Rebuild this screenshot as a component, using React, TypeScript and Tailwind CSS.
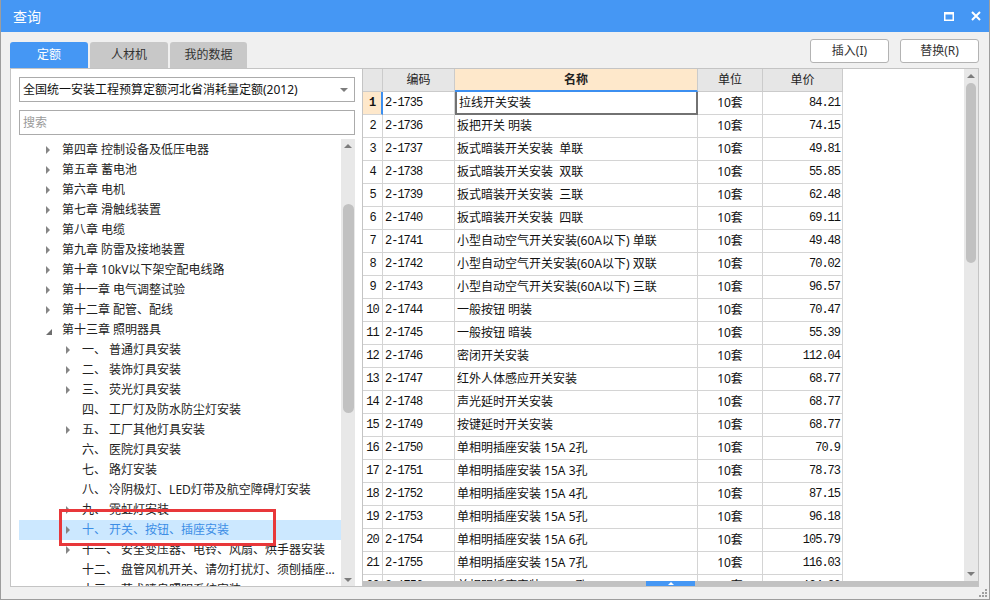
import React from "react";

const sans = "font-['Noto_Sans','Noto_Sans_CJK_SC',sans-serif]";
const mono = "font-['Liberation_Mono','Noto_Sans_CJK_SC',monospace]";

type Node = { lv: number; t: string; a?: "r" | "d"; sel?: boolean };

const tree: Node[] = [
  { lv: 1, t: "第四章 控制设备及低压电器", a: "r" },
  { lv: 1, t: "第五章 蓄电池", a: "r" },
  { lv: 1, t: "第六章 电机", a: "r" },
  { lv: 1, t: "第七章 滑触线装置", a: "r" },
  { lv: 1, t: "第八章 电缆", a: "r" },
  { lv: 1, t: "第九章 防雷及接地装置", a: "r" },
  { lv: 1, t: "第十章 10kV以下架空配电线路", a: "r" },
  { lv: 1, t: "第十一章 电气调整试验", a: "r" },
  { lv: 1, t: "第十二章 配管、配线", a: "r" },
  { lv: 1, t: "第十三章 照明器具", a: "d" },
  { lv: 2, t: "一、 普通灯具安装", a: "r" },
  { lv: 2, t: "二、 装饰灯具安装", a: "r" },
  { lv: 2, t: "三、 荧光灯具安装", a: "r" },
  { lv: 2, t: "四、 工厂灯及防水防尘灯安装" },
  { lv: 2, t: "五、 工厂其他灯具安装", a: "r" },
  { lv: 2, t: "六、 医院灯具安装" },
  { lv: 2, t: "七、 路灯安装" },
  { lv: 2, t: "八、 冷阴极灯、LED灯带及航空障碍灯安装" },
  { lv: 2, t: "九、 霓虹灯安装", a: "r" },
  { lv: 2, t: "十、 开关、按钮、插座安装", a: "r", sel: true },
  { lv: 2, t: "十一、 安全变压器、电铃、风扇、烘手器安装", a: "r" },
  { lv: 2, t: "十二、 盘管风机开关、请勿打扰灯、须刨插座、钥匙取电器安装" },
  { lv: 2, t: "十三、 艺术喷泉照明系统安装", a: "r" },
];

const rows: [string, string, string][] = [
  ["2-1735", "拉线开关安装", "84.21"],
  ["2-1736", "扳把开关 明装", "74.15"],
  ["2-1737", "扳式暗装开关安装  单联", "49.81"],
  ["2-1738", "扳式暗装开关安装  双联", "55.85"],
  ["2-1739", "扳式暗装开关安装  三联", "62.48"],
  ["2-1740", "扳式暗装开关安装  四联", "69.11"],
  ["2-1741", "小型自动空气开关安装(60A以下) 单联", "49.48"],
  ["2-1742", "小型自动空气开关安装(60A以下) 双联", "70.02"],
  ["2-1743", "小型自动空气开关安装(60A以下) 三联", "96.57"],
  ["2-1744", "一般按钮 明装", "70.47"],
  ["2-1745", "一般按钮 暗装", "55.39"],
  ["2-1746", "密闭开关安装", "112.04"],
  ["2-1747", "红外人体感应开关安装", "68.77"],
  ["2-1748", "声光延时开关安装", "68.77"],
  ["2-1749", "按键延时开关安装", "68.77"],
  ["2-1750", "单相明插座安装 15A 2孔", "70.9"],
  ["2-1751", "单相明插座安装 15A 3孔", "78.73"],
  ["2-1752", "单相明插座安装 15A 4孔", "87.15"],
  ["2-1753", "单相明插座安装 15A 5孔", "96.18"],
  ["2-1754", "单相明插座安装 15A 6孔", "105.79"],
  ["2-1755", "单相明插座安装 15A 7孔", "116.03"],
  ["2-1756", "单相明插座安装 15A 8孔", "124.30"],
];

const Up = () => (
  <span className="block w-0 h-0 border-x-[4px] border-x-transparent border-b-[4px] border-b-[#7c7c7c]" />
);
const Down = () => (
  <span className="block w-0 h-0 border-x-[4px] border-x-transparent border-t-[4px] border-t-[#7c7c7c]" />
);

const TreeRow = ({ n }: { n: Node }) => (
  <div
    className={`h-5 flex items-center pr-[3px] ${
      n.sel ? "bg-[#cce8ff] text-[#3d8ee6]" : "text-[#222]"
    }`}
  >
    <span className={`${n.lv === 1 ? "ml-[27px]" : "ml-[47px]"} w-4 shrink-0 flex items-center`}>
      {n.a === "r" && (
        <span className="block w-0 h-0 border-y-[4px] border-y-transparent border-l-[4px] border-l-[#858585]" />
      )}
      {n.a === "d" && (
        <svg width="6" height="6" className="mt-[3px]">
          <polygon points="6,0 6,6 0,6" fill="#6e6e6e" />
        </svg>
      )}
    </span>
    <span className="truncate min-w-0 whitespace-pre">{n.t}</span>
  </div>
);

const App = () => {
  return (
    <div
      className={`relative w-[990px] h-[600px] bg-[#f0f0f0] flex flex-col border-x border-b border-[#9d9d9d] text-[12px] ${sans}`}
    >
      {/* title bar */}
      <div className="h-8 shrink-0 bg-[#4597f4] flex items-center justify-between pl-3 pr-[8px]">
        <span className="text-white text-[14px]">查询</span>
        <div className="flex items-center gap-[17px]">
          <svg width="10" height="9" viewBox="0 0 10 9">
            <rect x="0.75" y="1" width="8.5" height="7.25" fill="none" stroke="#fff" strokeWidth="1.5" />
            <rect x="0" y="0" width="10" height="2.5" fill="#fff" />
          </svg>
          <svg width="10" height="10" viewBox="0 0 10 10">
            <path d="M1 1 L9 9 M9 1 L1 9" stroke="#fff" strokeWidth="2" />
          </svg>
        </div>
      </div>

      <div className="flex-1 flex flex-col pl-[9px] pr-[10px]">
        {/* tabs + buttons */}
        <div className="h-9 shrink-0 flex justify-between">
          <div className="self-end flex gap-[2px]">
            <div className="w-[78px] h-[26px] rounded-t-[3px] bg-[#4597f4] text-white flex items-center justify-center">
              定额
            </div>
            <div className="w-[78px] h-[26px] rounded-t-[3px] bg-[#c8c8c8] text-[#333] flex items-center justify-center">
              人材机
            </div>
            <div className="w-[77px] h-[26px] rounded-t-[3px] bg-[#c8c8c8] text-[#333] flex items-center justify-center">
              我的数据
            </div>
          </div>
          <div className="mt-[7px] flex gap-[11px]">
            <button className="w-[79px] h-6 bg-white border border-[#b3b3b3] rounded-[3px] text-[#333]">
              插入(I)
            </button>
            <button className="w-[79px] h-6 bg-white border border-[#b3b3b3] rounded-[3px] text-[#333]">
              替换(R)
            </button>
          </div>
        </div>

        {/* content box */}
        <div className="h-[519px] shrink-0 flex border border-[#c4c4c4] bg-white">
          {/* left panel */}
          <div className="w-[352px] shrink-0 border-r border-[#c4c4c4] flex flex-col pl-2 pr-[7px] pt-2">
            <div className="h-[25px] shrink-0 border border-[#ababab] flex items-center justify-between pl-[3px] pr-[6px] text-[#111]">
              <span>全国统一安装工程预算定额河北省消耗量定额(2012)</span>
              <Down />
            </div>
            <div className="h-[25px] mt-2 shrink-0 border border-[#ababab] flex items-center pl-[3px] text-[#9a9a9a]">
              搜索
            </div>
            <div className="mt-1 flex-1 min-h-0 flex">
              <div className="flex-1 min-w-0 overflow-hidden pt-px">
                {tree.map((n, i) => (
                  <TreeRow key={i} n={n} />
                ))}
              </div>
              <div className="w-[14px] shrink-0 bg-[#e8e8e8] flex flex-col items-center">
                <div className="h-[14px] flex items-center">
                  <Up />
                </div>
                <div className="mt-[51px] w-[11px] h-[209px] rounded-full bg-[#c1c1c1]" />
                <div className="flex-1" />
                <div className="h-[12px] flex items-center">
                  <Down />
                </div>
              </div>
            </div>
          </div>

          {/* table area */}
          <div className="flex-1 min-w-0 flex flex-col">
            <div className="h-[512px] flex">
              <div className="flex-1 min-w-0 overflow-hidden">
                <div className="flex h-[23px] text-[#222]">
                  <div className="w-[20px] bg-[#e6e6e6] border-r border-b border-[#cbcbcb]" />
                  <div className="w-[72px] bg-[#e6e6e6] border-r border-b border-[#cbcbcb] flex items-center justify-center">
                    编码
                  </div>
                  <div className="w-[243px] bg-[#fee8cb] border-r border-[#cbcbcb] border-b-2 border-b-[#3c8ff0] flex items-center justify-center font-bold">
                    名称
                  </div>
                  <div className="w-[65px] bg-[#e6e6e6] border-r border-b border-[#cbcbcb] flex items-center justify-center">
                    单位
                  </div>
                  <div className="w-[80px] bg-[#e6e6e6] border-r border-b border-[#cbcbcb] flex items-center justify-center">
                    单价
                  </div>
                </div>
                {rows.map((r, i) => {
                  const first = i === 0;
                  return (
                    <div key={i} className="flex h-[23px] text-[#111]">
                      <div
                        className={`w-[20px] border-b border-[#d4d4d4] flex items-center justify-center ${mono} text-[12px] tracking-[-1px] ${
                          first
                            ? "bg-[#fee8cb] font-bold border-r-2 border-r-[#3c8ff0]"
                            : "border-r"
                        }`}
                      >
                        {i + 1}
                      </div>
                      <div
                        className={`w-[72px] border-r border-b border-[#d4d4d4] flex items-center pl-[2px] ${mono} text-[12px] tracking-[-1px]`}
                      >
                        {r[0]}
                      </div>
                      <div
                        className={`w-[243px] flex items-center pl-[2px] whitespace-pre ${
                          first
                            ? "border-x-2 border-b-2 border-[#727272]"
                            : "border-r border-b border-[#d4d4d4]"
                        }`}
                      >
                        {r[1]}
                      </div>
                      <div className="w-[65px] border-r border-b border-[#d4d4d4] flex items-center justify-center">
                        10套
                      </div>
                      <div
                        className={`w-[80px] border-r border-b border-[#d4d4d4] flex items-center justify-end pr-[2px] ${mono} text-[12px] tracking-[-1px]`}
                      >
                        {r[2]}
                      </div>
                    </div>
                  );
                })}
              </div>
              <div className="w-[14px] shrink-0 bg-[#e8e8e8] flex flex-col items-center">
                <div className="h-[14px] flex items-center">
                  <Up />
                </div>
                <div className="w-[10px] h-[180px] rounded-full bg-[#c1c1c1]" />
                <div className="flex-1" />
                <div className="h-[14px] flex items-center">
                  <Down />
                </div>
              </div>
            </div>
            <div className="h-[5px] flex bg-[#c2c2c2]">
              <div className="w-[283px]" />
              <div className="w-[49px] bg-[#4597f4] flex items-center justify-center">
                <span className="block w-0 h-0 border-x-[3px] border-x-transparent border-b-[3px] border-b-white" />
              </div>
            </div>
          </div>
        </div>
      </div>

      {/* bottom strip */}
      <div className="h-[12px] shrink-0" />

      {/* resize grip */}
      <svg className="absolute right-[2px] bottom-[2px]" width="9" height="9" viewBox="0 0 9 9">
        {[
          [7, 1],
          [4, 4],
          [7, 4],
          [1, 7],
          [4, 7],
          [7, 7],
        ].map(([x, y], i) => (
          <rect key={i} x={x} y={y} width="2" height="2" fill="#a0a0a0" />
        ))}
      </svg>

      {/* red annotation */}
      <div className="absolute left-[58px] top-[509px] w-[217px] h-[37px] border-[3px] border-[#e8373a]" />
    </div>
  );
};

export default App;
